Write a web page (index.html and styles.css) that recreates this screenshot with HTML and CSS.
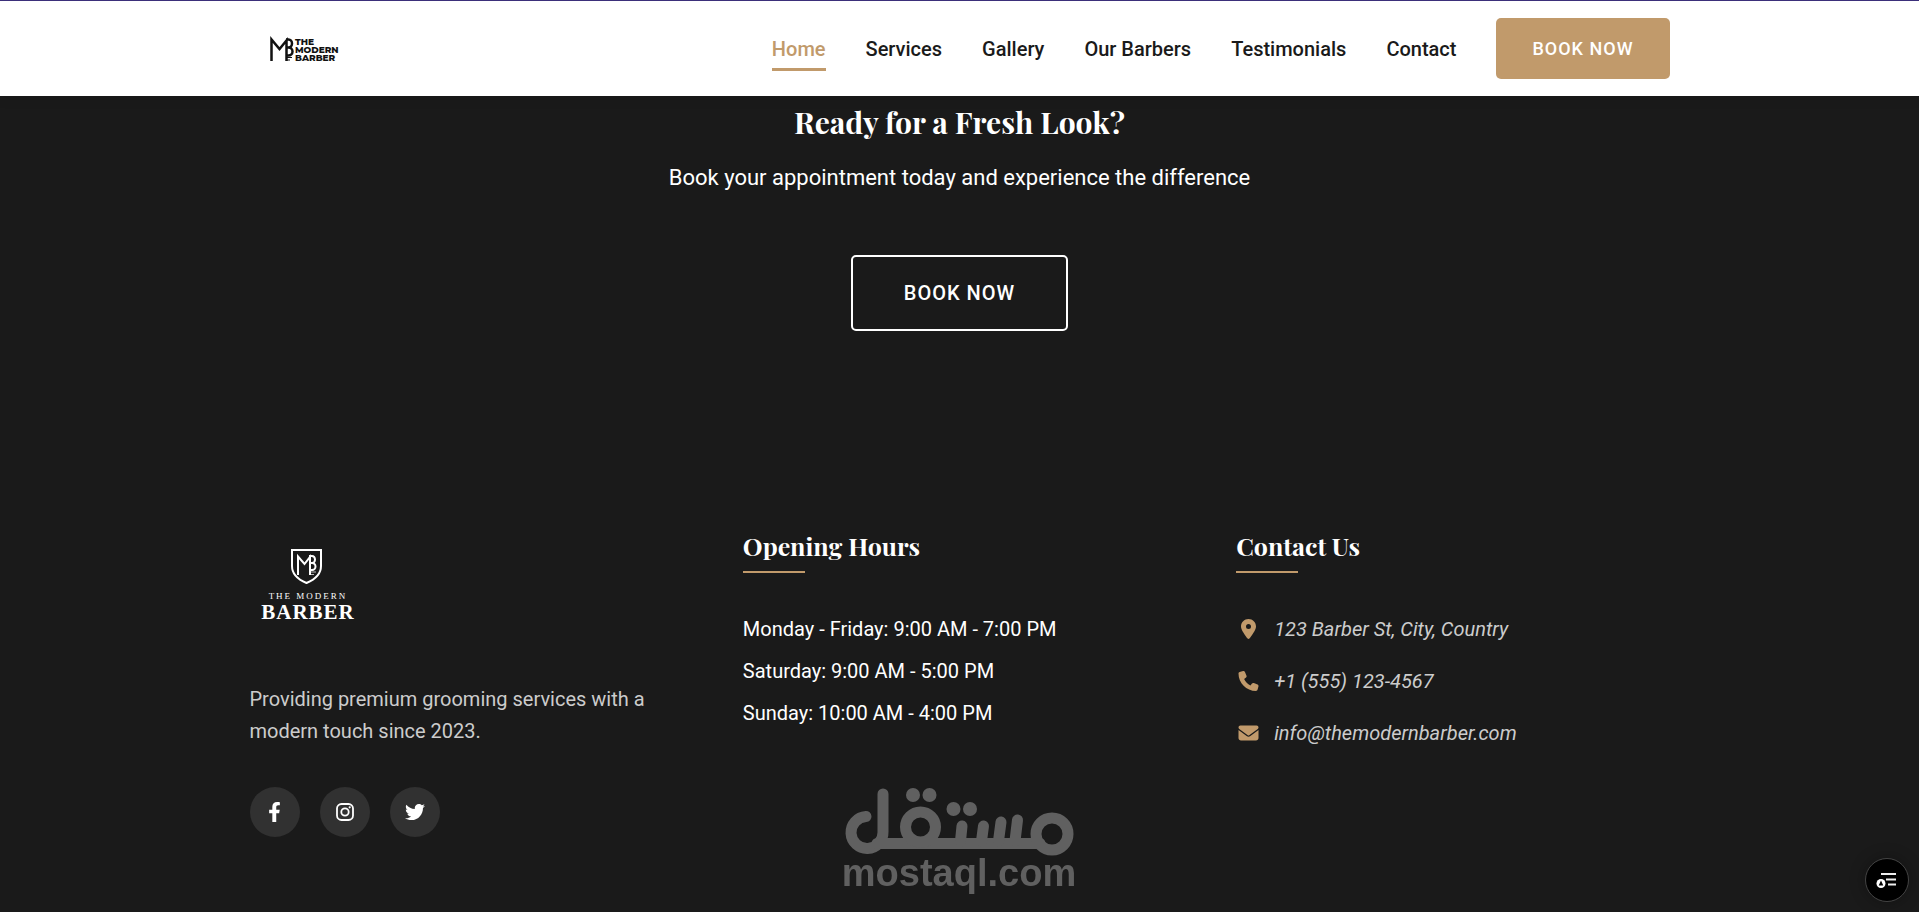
FILE: index.html
```html
<!DOCTYPE html>
<html lang="en">
<head>
  <meta charset="UTF-8" />
  <meta name="viewport" content="width=device-width, initial-scale=1.0" />
  <title>The Modern Barber</title>
  <link rel="stylesheet" href="styles.css">
</head>
<body>
  <header class="header">
    <div class="container header-inner">
      <a href="#home" class="logo" aria-label="The Modern Barber">
        <svg width="114" height="60" viewBox="0 0 114 60">
          <g fill="none" stroke="#111">
            <path d="M21.500 42V20.500L29.500 30L36.500 21.500V42" stroke-width="2.500" />
            <path d="M36 20.500H38.500A3.500 4 0 0 1 38.500 28.500H37M38.500 28.500A4 4 0 0 1 38.500 36.500H37" stroke-width="2.500" />
            <path d="M37 38.500H42M37 41H40" stroke-width="1" />
          </g>
          <g class="logo-text">
            <text x="45" y="26">THE</text>
            <text x="45" y="34">MODERN</text>
            <text x="45" y="42">BARBER</text>
          </g>
        </svg>
      </a>
      <nav class="nav">
        <a href="#home" class="nav-link active">Home</a>
        <a href="#services" class="nav-link">Services</a>
        <a href="#gallery" class="nav-link">Gallery</a>
        <a href="#barbers" class="nav-link">Our Barbers</a>
        <a href="#testimonials" class="nav-link">Testimonials</a>
        <a href="#contact" class="nav-link">Contact</a>
        <a href="#book" class="btn btn-primary">BOOK NOW</a>
      </nav>
    </div>
  </header>

  <section class="cta" id="book">
    <h2>Ready for a Fresh Look?</h2>
    <p>Book your appointment today and experience the difference</p>
    <a href="#book" class="btn btn-outline">BOOK NOW</a>
  </section>

  <footer class="footer" id="contact">
    <div class="container footer-grid">
      <div class="footer-about">
        <svg class="footer-logo" width="114" height="114" viewBox="0 0 114 114" role="img" aria-label="The Modern Barber">
          <g fill="none" stroke="#fff">
            <path d="M42 21H71V37Q71 48 56.500 54Q42 48 42 37Z" stroke-width="2" />
            <path d="M48 46V27.500L54.500 35L60 28V46" stroke-width="2" />
            <path d="M59 27H62A3 3.500 0 0 1 62 34H60M62 34A3.500 3.500 0 0 1 62 41H60" stroke-width="2" />
            <path d="M61 43H66M61 45.500H64" stroke-width="1" opacity="0.7" />
          </g>
          <text class="footer-logo-small" x="58" y="70">THE MODERN</text>
          <text class="footer-logo-big" x="58" y="90">BARBER</text>
        </svg>
        <p>Providing premium grooming services with a modern touch since 2023.</p>
        <div class="social">
          <a href="#facebook" aria-label="Facebook">
            <svg width="13" height="20" viewBox="0 0 320 512"><path d="M279.140 288l14.220-92.660h-88.910v-60.130c0-25.350 12.420-50.060 52.240-50.060h40.420V6.260S260.430 0 225.360 0c-73.220 0-121.080 44.380-121.080 124.720v70.620H22.890V288h81.390v224h100.170V288z" /></svg>
          </a>
          <a href="#instagram" aria-label="Instagram">
            <svg width="20" height="20" viewBox="0 0 20 20">
              <rect x="2" y="2" width="16" height="16" rx="4.500" fill="none" stroke="#fff" stroke-width="1.800" />
              <circle cx="10" cy="10" r="3.700" fill="none" stroke="#fff" stroke-width="1.800" />
              <circle cx="14.700" cy="5.300" r="1.100" />
            </svg>
          </a>
          <a href="#twitter" aria-label="Twitter">
            <svg width="20" height="20" viewBox="0 0 512 512"><path d="M459.370 151.716c.325 4.548.325 9.097.325 13.645 0 138.720-105.583 298.558-298.558 298.558-59.452 0-114.680-17.219-161.137-47.106 8.447.974 16.568 1.299 25.340 1.299 49.055 0 94.213-16.568 130.274-44.832-46.132-.975-84.792-31.188-98.112-72.772 6.498.974 12.995 1.624 19.818 1.624 9.421 0 18.843-1.300 27.614-3.573-48.081-9.747-84.143-51.980-84.143-102.985v-1.299c13.969 7.797 30.214 12.670 47.431 13.319-28.264-18.843-46.781-51.005-46.781-87.391 0-19.492 5.197-37.360 14.294-52.954 51.655 63.675 129.300 105.258 216.365 109.807-1.624-7.797-2.599-15.918-2.599-24.040 0-57.828 46.782-104.934 104.934-104.934 30.213 0 57.502 12.670 76.670 33.137 23.715-4.548 46.456-13.320 66.599-25.340-7.798 24.366-24.366 44.833-46.132 57.827 21.117-2.273 41.584-8.122 60.426-16.243-14.292 20.791-32.161 39.308-52.628 54.253z" /></svg>
          </a>
        </div>
      </div>

      <div>
        <h3>Opening Hours</h3>
        <ul class="hours">
          <li>Monday - Friday: 9:00 AM - 7:00 PM</li>
          <li>Saturday: 9:00 AM - 5:00 PM</li>
          <li>Sunday: 10:00 AM - 4:00 PM</li>
        </ul>
      </div>

      <div>
        <h3>Contact Us</h3>
        <address class="contact-list">
          <div class="contact-item">
            <svg width="25" height="20" viewBox="-128 0 640 512"><path d="M215.700 499.200C267 435 384 279.400 384 192C384 86 298 0 192 0S0 86 0 192c0 87.400 117 243 168.300 307.200c12.300 15.300 35.100 15.300 47.400 0zM192 128a64 64 0 1 1 0 128 64 64 0 1 1 0-128z" /></svg>
            <span>123 Barber St, City, Country</span>
          </div>
          <div class="contact-item">
            <svg width="25" height="20" viewBox="-64 0 640 512"><path d="M164.900 24.600c-7.700-18.600-28-28.500-47.400-23.200l-88 24C12.100 30.200 0 46 0 64C0 311.400 200.600 512 448 512c18 0 33.800-12.100 38.600-29.500l24-88c5.300-19.400-4.600-39.700-23.200-47.400l-96-40c-16.300-6.800-35.200-2.100-46.300 11.600L304.700 368C234.300 334.700 177.300 277.700 144 207.300L193.300 167c13.700-11.200 18.400-30 11.600-46.300l-40-96z" /></svg>
            <span>+1 (555) 123-4567</span>
          </div>
          <div class="contact-item">
            <svg width="25" height="20" viewBox="-64 0 640 512"><path d="M48 64C21.500 64 0 85.500 0 112c0 15.100 7.100 29.300 19.200 38.400L236.800 313.600c11.400 8.500 27 8.500 38.400 0L492.800 150.400c12.100-9.100 19.200-23.300 19.200-38.400c0-26.500-21.500-48-48-48H48zM0 176V384c0 35.300 28.700 64 64 64H448c35.300 0 64-28.700 64-64V176L294.400 339.200c-22.800 17.100-54 17.100-76.800 0L0 176z" /></svg>
            <span>info@themodernbarber.com</span>
          </div>
        </address>
      </div>
    </div>
  </footer>

  <div class="watermark">
    <svg width="232" height="108" viewBox="0 0 232 108" role="img" aria-label="مستقل mostaql.com">
      <g fill="none" stroke="#606060" stroke-width="11" stroke-linecap="round">
        <path d="M22 28.500A16 16 0 1 0 39 44V6" />
        <path d="M33 55.500H196" />
        <circle cx="76.500" cy="39" r="15" />
        <circle cx="208" cy="46" r="16" />
        <path d="M118 38L116.500 53M139.500 38L137.500 53M157 34L154.500 53M173.500 32L171 53" stroke-width="11" />
      </g>
      <g fill="#606060">
        <circle cx="69" cy="7" r="7" />
        <circle cx="85.500" cy="7" r="7" />
        <circle cx="109.500" cy="21" r="7" />
        <circle cx="126" cy="21" r="7" />
      </g>
      <text class="watermark-text" x="115" y="98">mostaql.com</text>
    </svg>
  </div>

  <button class="widget" type="button" aria-label="Open menu">
    <svg width="22" height="18" viewBox="0 0 22 18">
      <path d="M5 3H20M10 8.500H20M12 13.500H20" stroke="#eee" stroke-width="2" />
      <circle cx="5" cy="12.500" r="4.500" fill="#fff" />
      <path d="M5 9.500L7.300 14.500H2.700Z" fill="#000" />
    </svg>
  </button>
</body>
</html>
```
FILE: styles.css
```css
* {
  margin: 0;
  padding: 0;
  box-sizing: border-box;
}

body {
  background: #1a1a1a;
  color: #fff;
  font-family: Roboto, "Liberation Sans", sans-serif;
  font-size: 20px;
  line-height: 32px;
}

a {
  text-decoration: none;
}

.container {
  max-width: 1420px;
  margin: 0 auto;
}

h2, h3 {
  font-family: "Playfair Display", "Liberation Serif", serif;
  font-weight: bold;
}

/* header */
.header {
  position: sticky;
  top: 0;
  z-index: 10;
  background: #fff;
  border-top: 1px solid #3b2f7a;
  box-shadow: 0 2px 12px rgba(0, 0, 0, 0.1);
}

.header-inner {
  display: flex;
  align-items: center;
  justify-content: space-between;
  padding: 17px 0;
}

.logo svg {
  display: block;
}

.logo-text {
  font-family: Montserrat, Inter, "Liberation Sans", sans-serif;
  font-size: 9px;
  font-weight: 800;
  fill: #111;
}

.nav {
  display: flex;
  align-items: center;
  gap: 40px;
}

.nav-link {
  position: relative;
  padding: 6px 0;
  color: #1a1a1a;
  font-weight: 500;
}

.nav-link.active {
  color: #c19a6b;
}

.nav-link.active::after {
  content: "";
  position: absolute;
  left: 0;
  bottom: 0;
  width: 100%;
  height: 3px;
  background: #c19a6b;
}

.btn {
  display: inline-block;
  border-radius: 5px;
  color: #fff;
  font-weight: 500;
}

.btn-primary {
  padding: 15px 36px;
  background: #c19a6b;
  font-size: 18px;
  line-height: 31px;
  letter-spacing: 1px;
}

.btn-outline {
  padding: 20px 51px;
  border: 2px solid #fff;
  letter-spacing: 1px;
}

/* call to action */
.cta {
  padding: 6px 20px 98px;
  text-align: center;
}

.cta h2 {
  margin-bottom: 18px;
  font-size: 30px;
  line-height: 40px;
}

.cta p {
  margin-bottom: 60px;
  font-size: 22px;
  line-height: 35px;
}

.cta .btn {
  display: block;
  width: fit-content;
  margin: 0 auto;
}

/* footer */
.footer {
  padding: 100px 0 60px;
}

.footer-grid {
  display: grid;
  grid-template-columns: repeat(3, 1fr);
  gap: 60px;
}

.footer h3 {
  position: relative;
  margin-bottom: 40px;
  padding-bottom: 10px;
  font-size: 25px;
  line-height: 34px;
}

.footer h3::after {
  content: "";
  position: absolute;
  left: 0;
  bottom: 0;
  width: 62px;
  height: 2px;
  background: #c19a6b;
}

.footer-logo {
  display: block;
  margin-bottom: 40px;
  fill: #fff;
  font-family: "Liberation Serif", serif;
  text-anchor: middle;
}

.footer-logo-small {
  font-size: 9px;
  letter-spacing: 2px;
}

.footer-logo-big {
  font-size: 21px;
  font-weight: bold;
  letter-spacing: 1px;
}

.footer-about p {
  margin-bottom: 40px;
  color: #ccc;
}

.social {
  display: flex;
  gap: 20px;
}

.social a {
  display: flex;
  align-items: center;
  justify-content: center;
  width: 50px;
  height: 50px;
  border-radius: 50%;
  background: #313131;
}

.social svg {
  fill: #fff;
}

.hours {
  display: grid;
  gap: 10px;
  list-style: none;
}

.contact-list {
  display: grid;
  gap: 20px;
  color: #ccc;
}

.contact-item {
  display: flex;
  align-items: center;
  gap: 13px;
}

.contact-item svg {
  fill: #c19a6b;
}

/* overlays */
.watermark {
  position: fixed;
  left: 0;
  right: 0;
  bottom: 16px;
  display: flex;
  justify-content: center;
  pointer-events: none;
}

.watermark svg {
  overflow: visible;
}

.watermark-text {
  fill: #606060;
  font-family: "Liberation Sans", sans-serif;
  font-size: 38px;
  font-weight: bold;
  text-anchor: middle;
}

.widget {
  position: fixed;
  right: 10px;
  bottom: 10px;
  display: flex;
  align-items: center;
  justify-content: center;
  width: 44px;
  height: 44px;
  border: 1px solid #444;
  border-radius: 50%;
  background: #000;
  box-shadow: 0 0 16px rgba(0, 0, 0, 0.3);
  cursor: pointer;
}
```
